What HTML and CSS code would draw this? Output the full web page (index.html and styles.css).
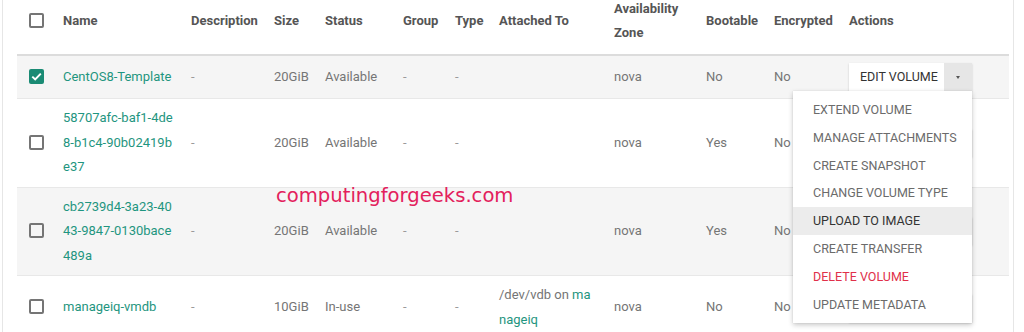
FILE: index.html
```html
<!DOCTYPE html>
<html>
<head>
<meta charset="utf-8">
<link rel="stylesheet" href="styles.css">
</head>
<body>
<div class="panel">
  <table class="vol">
    <colgroup>
      <col class="w-chk"><col class="w-name"><col class="w-desc"><col class="w-size"><col class="w-status"><col class="w-group"><col class="w-type"><col class="w-att"><col class="w-az"><col class="w-boot"><col class="w-enc"><col class="w-act">
    </colgroup>
    <thead>
      <tr>
        <th class="chk"><span class="cb"></span></th>
        <th>Name</th>
        <th>Description</th>
        <th>Size</th>
        <th>Status</th>
        <th>Group</th>
        <th>Type</th>
        <th>Attached To</th>
        <th>Availability Zone</th>
        <th>Bootable</th>
        <th>Encrypted</th>
        <th>Actions</th>
      </tr>
    </thead>
    <tbody>
      <tr class="odd">
        <td class="chk"><span class="cb on"><svg viewBox="0 0 15 15" width="15" height="15"><path d="M3.3 7.6 L6.2 10.4 L11.8 4.6" fill="none" stroke="#fff" stroke-width="2"/></svg></span></td>
        <td class="name"><a>CentOS8-Template</a></td>
        <td class="dash">-</td>
        <td>20GiB</td>
        <td>Available</td>
        <td class="dash">-</td>
        <td class="dash">-</td>
        <td class="att"></td>
        <td>nova</td>
        <td>No</td>
        <td>No</td>
        <td>
          <div class="btn-group">
            <span class="btn">EDIT VOLUME</span><span class="caret-btn"><span class="caret"></span></span>
            <ul class="menu">
              <li>EXTEND VOLUME</li>
              <li>MANAGE ATTACHMENTS</li>
              <li>CREATE SNAPSHOT</li>
              <li>CHANGE VOLUME TYPE</li>
              <li class="hover">UPLOAD TO IMAGE</li>
              <li>CREATE TRANSFER</li>
              <li class="danger">DELETE VOLUME</li>
              <li>UPDATE METADATA</li>
            </ul>
          </div>
        </td>
      </tr>
      <tr>
        <td class="chk"><span class="cb"></span></td>
        <td class="name"><a>58707afc-baf1-4de8-b1c4-90b02419be37</a></td>
        <td class="dash">-</td>
        <td>20GiB</td>
        <td>Available</td>
        <td class="dash">-</td>
        <td class="dash">-</td>
        <td class="att"></td>
        <td>nova</td>
        <td>Yes</td>
        <td>No</td>
        <td><div class="btn-group"><span class="btn">EDIT VOLUME</span><span class="caret-btn"><span class="caret"></span></span></div></td>
      </tr>
      <tr class="odd">
        <td class="chk"><span class="cb"></span></td>
        <td class="name"><a>cb2739d4-3a23-4043-9847-0130bace489a</a></td>
        <td class="dash">-</td>
        <td>20GiB</td>
        <td>Available</td>
        <td class="dash">-</td>
        <td class="dash">-</td>
        <td class="att"></td>
        <td>nova</td>
        <td>Yes</td>
        <td>No</td>
        <td><div class="btn-group"><span class="btn">EDIT VOLUME</span><span class="caret-btn"><span class="caret"></span></span></div></td>
      </tr>
      <tr>
        <td class="chk"><span class="cb"></span></td>
        <td class="name"><a>manageiq-vmdb</a></td>
        <td class="dash">-</td>
        <td>10GiB</td>
        <td>In-use</td>
        <td class="dash">-</td>
        <td class="dash">-</td>
        <td class="att">/dev/vdb on <a>manageiq</a></td>
        <td>nova</td>
        <td>No</td>
        <td>No</td>
        <td><div class="btn-group"><span class="btn">EDIT VOLUME</span><span class="caret-btn"><span class="caret"></span></span></div></td>
      </tr>
    </tbody>
  </table>
</div>
<div class="watermark">computingforgeeks.com</div>
</body>
</html>
```

FILE: styles.css
```css
html, body {
  margin: 0;
  padding: 0;
  background: #fff;
  overflow: hidden;
}
body {
  font-family: Roboto, "Liberation Sans", sans-serif;
  font-size: 13px;
  color: #757575;
  position: relative;
  height: 332px;
}
.panel {
  margin-left: 2px;
  width: 1012px;
  height: 340px;
  border-left: 1px solid #e6e6e6;
  border-right: 1px solid #e6e6e6;
  padding: 0 4px 0 14px;
  box-sizing: border-box;
}
.vol {
  margin-top: -3px;
  width: 992px;
  table-layout: fixed;
  border-collapse: collapse;
}
.w-chk { width: 46px; }
.w-name { width: 128px; }
.w-desc { width: 83px; }
.w-size { width: 51px; }
.w-status { width: 78px; }
.w-group { width: 52px; }
.w-type { width: 44px; }
.w-att { width: 115px; }
.w-az { width: 92px; }
.w-boot { width: 68px; }
.w-enc { width: 75px; }
.w-act { width: 160px; }

th {
  text-align: left;
  font-weight: 700;
  color: #555;
  line-height: 24px;
  padding: 0 8px 9px 0;
  vertical-align: middle;
  border-bottom: 2px solid #dcdcdc;
}
td {
  line-height: 24.5px;
  padding: 7px 0;
  vertical-align: middle;
  border-top: 1px solid #e8e8e8;
}
tbody tr:first-child td { border-top: none; }
tr.odd td { background: #f5f5f5; }
.chk { padding-left: 12px; }
th.chk { padding-right: 0; }
.cb {
  display: inline-block;
  width: 15px;
  height: 15px;
  box-sizing: border-box;
  border: 2px solid #757575;
  border-radius: 2px;
  vertical-align: middle;
  position: relative;
  top: -1px;
}
.cb.on {
  border: none;
  background: #1a8b74;
}
.cb svg { display: block; }
a { color: #1f9580; text-decoration: none; }
.name { padding-right: 13px; word-break: break-all; }
.att { padding-right: 20px; word-break: break-all; }
.dash { color: #9a9a9a; }

.btn-group {
  position: relative;
  display: inline-flex;
  vertical-align: middle;
  box-shadow: 0 1px 2px rgba(0,0,0,0.18);
}
.btn {
  height: 28px;
  line-height: 28px;
  padding: 0 9px 0 11px;
  background: #fff;
  color: #333;
  font-size: 12.5px;
  width: 95px;
  box-sizing: border-box;
  white-space: nowrap;
}
.caret-btn {
  width: 28px;
  height: 28px;
  background: #e6e6e6;
  display: flex;
  align-items: center;
  justify-content: center;
}
.caret {
  width: 0;
  height: 0;
  border-left: 2.5px solid transparent;
  border-right: 2.5px solid transparent;
  border-top: 3px solid #555;
}
.menu {
  position: absolute;
  top: 100%;
  right: 0;
  width: 179px;
  margin: 0;
  padding: 5px 0;
  list-style: none;
  background: #fff;
  box-shadow: 0 2px 5px rgba(0,0,0,0.22), 0 0 1px rgba(0,0,0,0.12);
  z-index: 5;
}
.menu li {
  height: 27.8px;
  line-height: 27.8px;
  padding-left: 20px;
  font-size: 12.5px;
  color: #6b6b6b;
  white-space: nowrap;
}
.menu li.hover {
  background: #ececec;
  color: #333;
}
.menu li.danger { color: #e0304a; }

.watermark {
  position: absolute;
  left: 276px;
  top: 186px;
  font-family: "DejaVu Sans", Verdana, sans-serif;
  font-size: 19.6px;
  line-height: 1;
  color: #e3205c;
  white-space: nowrap;
  z-index: 10;
}
```
